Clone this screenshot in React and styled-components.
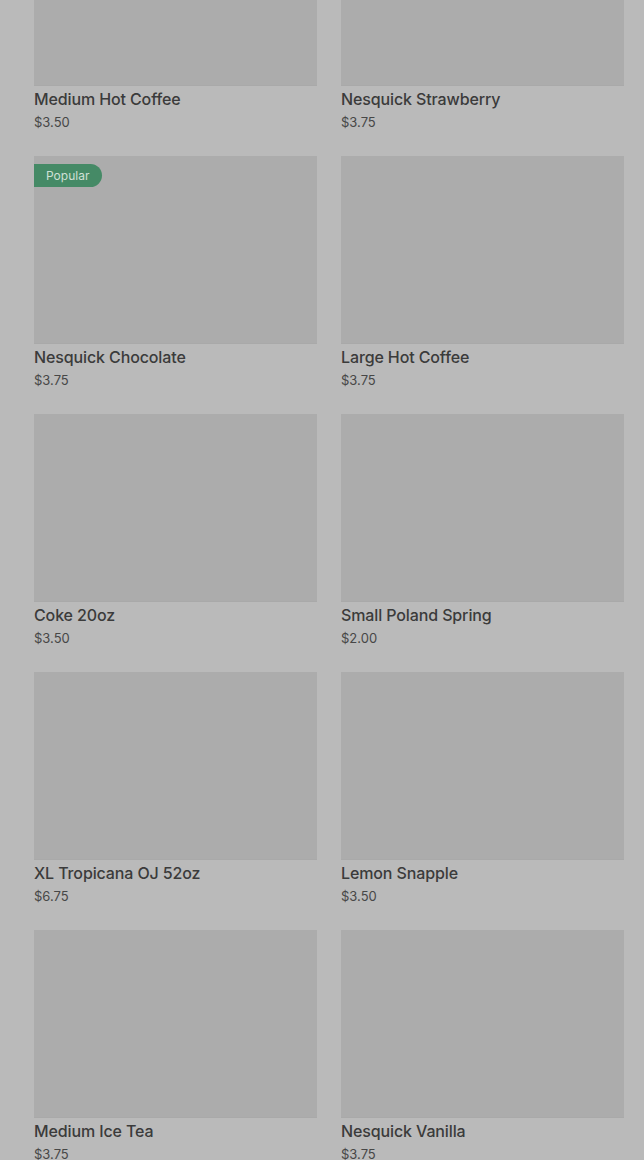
import styled, { createGlobalStyle } from "styled-components";

const GlobalStyle = createGlobalStyle`
    html, body {
        margin: 0;
        padding: 0;
        background: #bababa;
        overflow: hidden;
    }
    body {
        font-family: Inter, "Noto Sans", Arial, sans-serif;
    }
`;

const Page = styled.div`
    height: 1160px;
    overflow: hidden;
    padding: 0 20px 0 34px;
`;

// page is scrolled a bit, first row is cut at the top
const Grid = styled.div`
    display: grid;
    grid-template-columns: 1fr 1fr;
    column-gap: 24px;
    margin-top: -102px;
`;

const Card = styled.div`
    display: flex;
    flex-direction: column;
    padding-bottom: 24px;
    position: relative;
`;

const Thumb = styled.div`
    width: 100%;
    height: 188px;
    background: #acacac;
    box-shadow: inset 0 -1px 0 #a9a9a9;
`;

const Badge = styled.span`
    position: absolute;
    top: 8px;
    left: 0;
    height: 23px;
    padding: 0 13px 0 12px;
    display: flex;
    align-items: center;
    background: #458a66;
    color: #cfe0d6;
    font-size: 12px;
    border-radius: 0 12px 12px 0;
`;

const Name = styled.div`
    margin-top: 2px;
    font-size: 16px;
    font-weight: 500;
    line-height: 22px;
    letter-spacing: -0.12px;
    color: #3b3b3b;
`;

const Price = styled.div`
    margin-top: 2px;
    font-size: 13px;
    line-height: 20px;
    color: #474747;
`;

const items = [
    { name: "Medium Hot Coffee", price: "$3.50" },
    { name: "Nesquick Strawberry", price: "$3.75" },
    { name: "Nesquick Chocolate", price: "$3.75", popular: true },
    { name: "Large Hot Coffee", price: "$3.75" },
    { name: "Coke 20oz", price: "$3.50" },
    { name: "Small Poland Spring", price: "$2.00" },
    { name: "XL Tropicana OJ 52oz", price: "$6.75" },
    { name: "Lemon Snapple", price: "$3.50" },
    { name: "Medium Ice Tea", price: "$3.75" },
    { name: "Nesquick Vanilla", price: "$3.75" },
];

function App() {
    return (
        <>
            <GlobalStyle />
            <Page>
                <Grid>
                    {items.map((item) => (
                        <Card key={item.name}>
                            <Thumb />
                            {item.popular && <Badge>Popular</Badge>}
                            <Name>{item.name}</Name>
                            <Price>{item.price}</Price>
                        </Card>
                    ))}
                </Grid>
            </Page>
        </>
    );
}

export default App;
